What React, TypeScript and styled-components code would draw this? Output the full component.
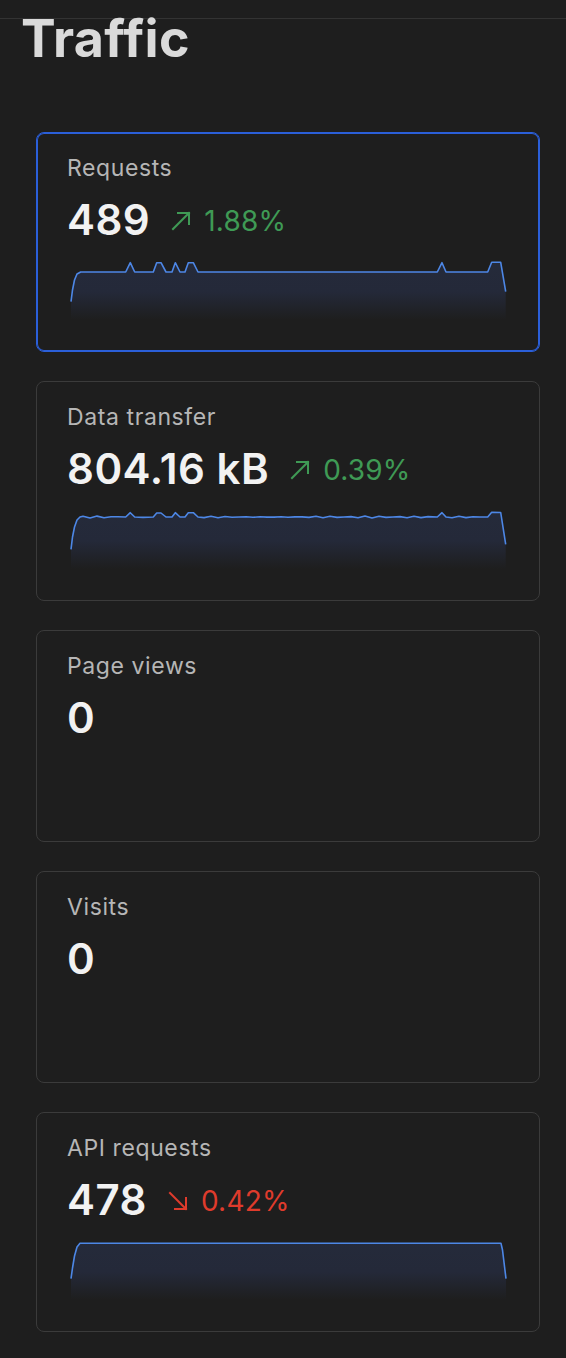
import { useId } from 'react'
import styled, { createGlobalStyle } from 'styled-components'

const GlobalStyle = createGlobalStyle`
  html, body {
    margin: 0;
    padding: 0;
    background: #1e1e1e;
  }
  body {
    font-family: Inter, "Noto Sans", "Liberation Sans", sans-serif;
    -webkit-font-smoothing: antialiased;
  }
`

type Pt = [number, number]

const CHART_W = 435
const CHART_H = 70

// small deterministic wobble for the noisy series
const wobble = (from: number, to: number, base: number, seed: number): Pt[] => {
  const pts: Pt[] = []
  for (let x = from; x < to; x += 7) {
    const d = Math.sin(x * 0.37 + seed) * 0.6 + Math.sin(x * 1.3 + seed * 2) * 0.4
    pts.push([x, base + d])
  }
  return pts
}

const requestsData: Pt[] = [
  [0, 51.7], [1.5, 40], [3.5, 30], [6, 24], [9.7, 22],
  [54.7, 22], [59.3, 12.7], [63.7, 22],
  [82.3, 22], [85.7, 12.7], [90, 12.7], [95, 22],
  [101, 22], [104.3, 12.7], [109, 22],
  [114, 22], [117.3, 12.7], [122.3, 12.7], [127, 22],
  [366.3, 22], [371, 12.7], [375, 22],
  [416.7, 22], [420.7, 12.3], [429.7, 12.3], [434.7, 41.7],
]

const transferData: Pt[] = [
  [0, 50.3], [1.5, 38], [3.5, 28], [6, 21], [9, 18],
  ...wobble(12, 54, 18, 1),
  [54.7, 18], [59.3, 13.7], [63.7, 18],
  [72, 18.4], [82.3, 18], [85.7, 14], [90, 14], [95, 18],
  [101, 18], [104.3, 13.7], [109, 18],
  [114, 18], [117.3, 13.7], [122.3, 13.7], [127, 18],
  ...wobble(133, 364, 18, 3),
  [366.3, 18], [371, 13.7], [375, 18],
  ...wobble(381, 414, 18, 5),
  [416.7, 18], [420.7, 13.3], [429.7, 13.5], [434.7, 45.3],
]

const apiData: Pt[] = [
  [0, 48.7], [1.5, 38], [3.5, 26], [6, 17], [9, 13.3],
  [430, 13.3], [431.5, 20], [435, 48.7],
]

const Page = styled.div`
  min-height: 1358px;
  background: #1e1e1e;
`

const TopBar = styled.div`
  height: 18px;
  border-bottom: 1px solid #333333;
`

const Title = styled.h1`
  margin: -6px 0 0 21px;
  font-size: 52px;
  line-height: 1;
  font-weight: 700;
  color: #dadada;
  letter-spacing: 0.3px;
`

const CardList = styled.div`
  display: flex;
  flex-direction: column;
  gap: 29px;
  padding: 67px 26px 26px 36px;
`

const Card = styled.div<{ $active?: boolean }>`
  display: flex;
  flex-direction: column;
  padding: 21px 30px 31px;
  border: 1px solid ${({ $active }) => ($active ? '#2b5fd9' : '#3b3b3b')};
  box-shadow: ${({ $active }) => ($active ? 'inset 0 0 0 1px #2b5fd9' : 'none')};
  border-radius: 8px;
  background: #1e1e1e;
`

const Label = styled.div`
  font-size: 23px;
  line-height: 28px;
  color: #b6b6b6;
  letter-spacing: 0.6px;
`

const ValueRow = styled.div`
  margin-top: 14px;
  display: flex;
  align-items: center;
  height: 48px;
`

const Value = styled.div`
  font-size: 42px;
  line-height: 48px;
  font-weight: 600;
  color: #f2f2f2;
  letter-spacing: 0.5px;
`

const Delta = styled.div<{ $down?: boolean }>`
  display: flex;
  align-items: center;
  gap: 13px;
  margin-left: 21px;
  margin-top: 2px;
  font-size: 28px;
  line-height: 32px;
  letter-spacing: 0.2px;
  color: ${({ $down }) => ($down ? '#df3b2c' : '#3f9a55')};
`

const ChartSlot = styled.div<{ $empty?: boolean }>`
  margin-top: 6px;
  height: ${({ $empty }) => ($empty ? '62px' : '70px')};
  padding-left: 4px;
`

const Arrow = ({ down }: { down?: boolean }) => (
  <svg width="20" height="20" viewBox="0 0 20 20" fill="none" stroke="currentColor" strokeWidth="2" strokeLinecap="square">
    {down ? (
      <>
        <path d="M2 2 L18 18" />
        <path d="M7 18 H18 V7" />
      </>
    ) : (
      <>
        <path d="M2 18 L18 2" />
        <path d="M7 2 H18 V13" />
      </>
    )}
  </svg>
)

const Sparkline = ({ data }: { data: Pt[] }) => {
  const id = useId().replace(/:/g, '')
  const line = data.map(([x, y], i) => `${i ? 'L' : 'M'}${x.toFixed(1)} ${y.toFixed(1)}`).join(' ')
  const last = data[data.length - 1]
  const area = `${line} L${last[0]} ${CHART_H} L${data[0][0]} ${CHART_H} Z`
  return (
    <svg width={CHART_W} height={CHART_H} viewBox={`0 0 ${CHART_W} ${CHART_H}`} style={{ display: 'block', overflow: 'visible' }}>
      <defs>
        <linearGradient id={`g${id}`} x1="0" y1="0" x2="0" y2={CHART_H} gradientUnits="userSpaceOnUse">
          <stop offset="0" stopColor="#252b3b" />
          <stop offset="0.6" stopColor="#242939" />
          <stop offset="1" stopColor="#1e1e1e" />
        </linearGradient>
      </defs>
      <path d={area} fill={`url(#g${id})`} />
      <path d={line} fill="none" stroke="#4d87e6" strokeWidth="1.6" strokeLinejoin="round" />
    </svg>
  )
}

type Metric = {
  label: string
  value: string
  delta?: string
  down?: boolean
  data?: Pt[]
  active?: boolean
}

const metrics: Metric[] = [
  { label: 'Requests', value: '489', delta: '1.88%', data: requestsData, active: true },
  { label: 'Data transfer', value: '804.16 kB', delta: '0.39%', data: transferData },
  { label: 'Page views', value: '0' },
  { label: 'Visits', value: '0' },
  { label: 'API requests', value: '478', delta: '0.42%', down: true, data: apiData },
]

export default function App() {
  return (
    <>
      <GlobalStyle />
      <Page>
        <TopBar />
        <Title>Traffic</Title>
        <CardList>
          {metrics.map((m) => (
            <Card key={m.label} $active={m.active}>
              <Label>{m.label}</Label>
              <ValueRow>
                <Value>{m.value}</Value>
                {m.delta && (
                  <Delta $down={m.down}>
                    <Arrow down={m.down} />
                    {m.delta}
                  </Delta>
                )}
              </ValueRow>
              <ChartSlot $empty={!m.data}>
                {m.data && <Sparkline data={m.data} />}
              </ChartSlot>
            </Card>
          ))}
        </CardList>
      </Page>
    </>
  )
}
